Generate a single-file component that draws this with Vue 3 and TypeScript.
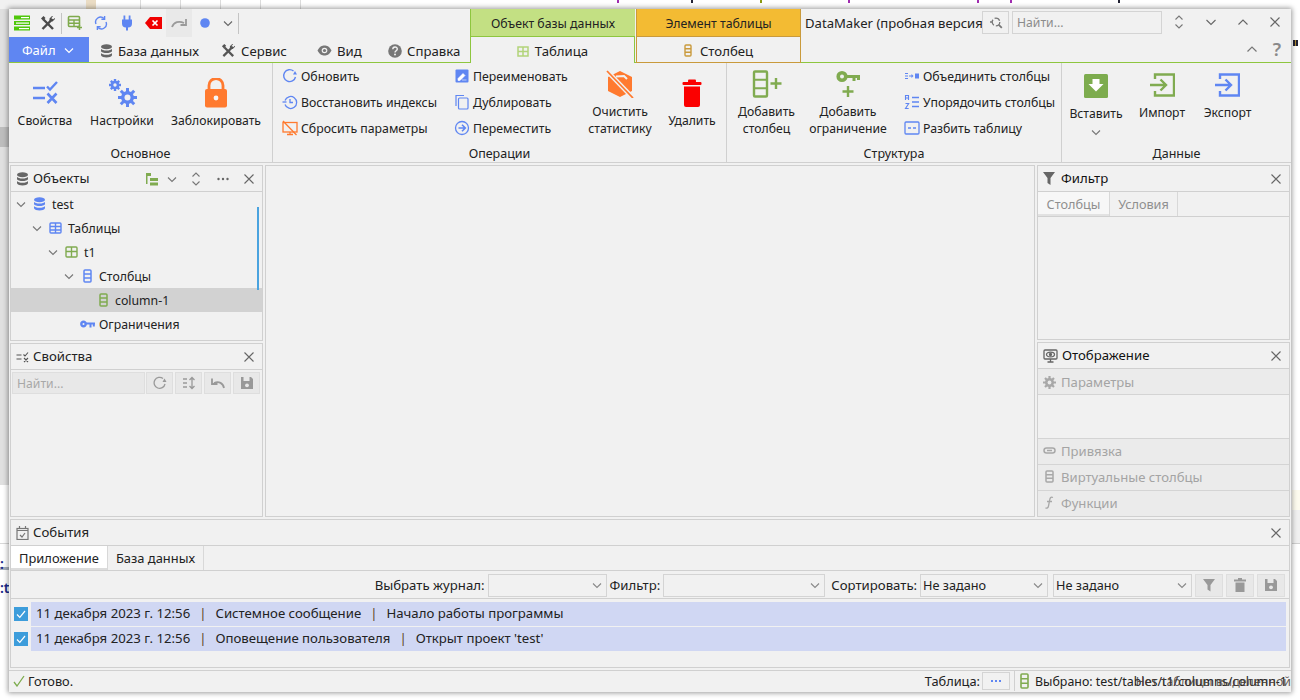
<script setup lang="ts">
type TreeRow = { label: string; level: number; kind: string; open: boolean; selected?: boolean }

const treeRows: TreeRow[] = [
  { label: 'test', level: 0, kind: 'db', open: true },
  { label: 'Таблицы', level: 1, kind: 'tables', open: true },
  { label: 't1', level: 2, kind: 'table', open: true },
  { label: 'Столбцы', level: 3, kind: 'columns', open: true },
  { label: 'column-1', level: 4, kind: 'column', open: false, selected: true },
  { label: 'Ограничения', level: 3, kind: 'key', open: false },
]

const logRows = [
  { date: '11 декабря 2023 г. 12:56', type: 'Системное сообщение', text: 'Начало работы программы' },
  { date: '11 декабря 2023 г. 12:56', type: 'Оповещение пользователя', text: "Открыт проект 'test'" },
]

const chevron = 'M3 5.5l4 4 4-4'
</script>

<template>
  <div class="desk">
    <!-- то, что видно за окном -->
    <div class="behind top-strip">
      <i class="tan"></i>
      <i v-for="x in [140, 180, 220, 260, 300]" :key="x" class="grid-line" :style="{ left: x + 'px' }"></i>
      <i
        v-for="m in [[617, '#a02cb0'], [691, '#223'], [760, '#8a9a10'], [848, '#a02cb0'], [977, '#a02cb0'], [1010, '#a02cb0'], [1118, '#223']]"
        :key="String(m[0])"
        class="mark"
        :style="{ left: m[0] + 'px', background: String(m[1]) }"
      ></i>
    </div>
    <div class="behind left-strip"><i class="patch"></i></div>
    <div class="behind left-line"></div>
    <div class="behind left-bar"></div>
    <div class="behind left-text">:<br />:t</div>
    <div class="behind right-yellow"></div>
    <div class="behind right-grey"></div>
    <div class="behind right-marks"></div>

    <div class="window">
      <!-- верхняя строка -->
      <header class="titlebar">
        <div class="quick">
          <button class="qbtn">
            <svg width="18" height="16" viewBox="0 0 18 16"><g fill="#4fc70a"><rect x="1" y="0.5" width="16" height="4" /><rect x="1" y="6" width="16" height="4" /><rect x="1" y="11.5" width="16" height="4" /></g><g fill="#fff"><rect x="8" y="2" width="8" height="1.2" /><rect x="3" y="7.5" width="13" height="1.2" /><rect x="6" y="13" width="10" height="1.2" /></g></svg>
          </button>
          <button class="qbtn">
            <svg width="16" height="16" viewBox="0 0 16 16" fill="none" stroke="#4a4a4a"><path d="M3.500 4.500l9.500 9.500" stroke-width="2.400" /><path d="M1 3.500L3.500 1l2 2-2.500 2.500z" fill="#4a4a4a" stroke="none" /><path d="M12.500 4L2.500 14" stroke-width="2.400" /><path d="M9.500 6V3.500L12 1l1 .3-1.800 2 1.500 1.500 2-1.800.3 1L12.500 6.500z" fill="#4a4a4a" stroke="none" /></svg>
          </button>
          <i class="qsep"></i>
          <button class="qbtn">
            <svg width="16" height="16" viewBox="0 0 16 16" fill="none"><rect x="1.500" y="1.500" width="11" height="10" rx="1" stroke="#7faa4c" stroke-width="1.600" /><path d="M1.500 5h11M7 5v6.500M2 8.300h10" stroke="#7faa4c" stroke-width="1.400" /><path d="M12.500 10v5M10 12.500h5" stroke="#7faa4c" stroke-width="1.500" /></svg>
          </button>
          <button class="qbtn">
            <svg width="14" height="16" viewBox="0 0 14 16" fill="none" stroke="#5f86f2" stroke-width="1.400"><path d="M2 9A5 5 0 0 1 10 3.400M12 7a5 5 0 0 1-8 5.600" /><path d="M10.600 1v3.200H7.400M3.400 15v-3.200h3.200" /></svg>
          </button>
          <button class="qbtn">
            <svg width="12" height="16" viewBox="0 0 12 16" fill="#5f86f2"><rect x="2.500" y="0.500" width="1.800" height="5" /><rect x="7.700" y="0.500" width="1.800" height="5" /><path d="M1 4.500h10v4a4 4 0 0 1-4 4V15.500H5v-3a4 4 0 0 1-4-4z" /></svg>
          </button>
          <button class="qbtn">
            <svg width="17" height="12" viewBox="0 0 17 12"><path d="M5 0h12v12H5L0 6z" fill="#f00000" /><path d="M7.500 3.500l5 5M12.500 3.500l-5 5" stroke="#fff" stroke-width="1.700" /></svg>
          </button>
          <button class="qbtn hovered">
            <svg width="16" height="10" viewBox="0 0 16 10" fill="none" stroke="#9a9a9a" stroke-width="1.800"><path d="M1 9c2-5 7-6.500 12-4" /><path d="M15 1v6H9.500" /></svg>
          </button>
          <button class="qbtn">
            <svg width="10" height="10" viewBox="0 0 10 10"><circle cx="5" cy="5" r="4.800" fill="#5f86f2" /></svg>
          </button>
          <button class="qbtn small">
            <svg width="14" height="14" viewBox="0 0 14 14" fill="none" stroke="#666" stroke-width="1.100"><path :d="chevron" /></svg>
          </button>
          <i class="qsep"></i>
        </div>
        <div class="ctx ctx-green">Объект базы данных</div>
        <div class="ctx ctx-orange">Элемент таблицы</div>
        <div class="app-title">DataMaker (пробная версия</div>
        <button class="search-btn">
          <svg width="14" height="14" viewBox="0 0 14 14" fill="none" stroke="#777" stroke-width="1.300"><circle cx="7" cy="6" r="3.800" stroke-dasharray="6 2" /><path d="M9.800 8.800l3 3" stroke-width="1.800" /><path d="M1 6h2" /></svg>
        </button>
        <div class="search-input">Найти...</div>
        <div class="win-btns">
          <svg width="14" height="16" viewBox="0 0 14 16" fill="none" stroke="#777" stroke-width="1.100"><path d="M3.500 5.500L7 2l3.500 3.500M3.500 10.500L7 14l3.500-3.500" /></svg>
          <svg width="14" height="14" viewBox="0 0 14 14" fill="none" stroke="#666" stroke-width="1.100"><path d="M2.500 5l4.500 4.500L11.500 5" /></svg>
          <svg width="14" height="14" viewBox="0 0 14 14" fill="none" stroke="#666" stroke-width="1.100"><path d="M2.500 9.500L7 5l4.500 4.500" /></svg>
          <svg width="14" height="14" viewBox="0 0 14 14" fill="none" stroke="#666" stroke-width="1.100"><path d="M2.500 2.500l9 9M11.500 2.500l-9 9" /></svg>
        </div>
      </header>

      <!-- вкладки ленты -->
      <nav class="tabbar">
        <div class="file-tab">
          Файл
          <svg width="14" height="14" viewBox="0 0 14 14" fill="none" stroke="#fff" stroke-width="1.200"><path :d="chevron" /></svg>
        </div>
        <div class="tab" style="width: 121px">
          <svg width="13" height="14" viewBox="0 0 13 14" fill="#666"><ellipse cx="6.500" cy="2.800" rx="5.500" ry="2.500" /><path d="M1 4.800c1 2.400 10 2.400 11 0v2.500c-1 2.400-10 2.400-11 0zM1 9c1 2.400 10 2.400 11 0v2.300c-1 2.900-10 2.900-11 0z" /></svg>
          База данных
        </div>
        <div class="tab" style="width: 96px">
          <svg width="15" height="15" viewBox="0 0 16 16" fill="none" stroke="#555"><path d="M3.500 4.500l9.500 9.500" stroke-width="2.400" /><path d="M1 3.500L3.500 1l2 2-2.500 2.500z" fill="#555" stroke="none" /><path d="M12.500 4L2.500 14" stroke-width="2.400" /><path d="M9.500 6V3.500L12 1l1 .3-1.800 2 1.500 1.500 2-1.800.3 1L12.500 6.500z" fill="#555" stroke="none" /></svg>
          Сервис
        </div>
        <div class="tab" style="width: 71px">
          <svg width="15" height="11" viewBox="0 0 15 11"><path d="M.5 5.500C3 1 5 .5 7.500.5s4.500.5 7 5c-2.500 4.500-4.500 5-7 5s-4.500-.5-7-5z" fill="#777" /><circle cx="7.500" cy="5.500" r="2.800" fill="#f1f1f1" /><circle cx="7.500" cy="5.500" r="1.600" fill="#777" /></svg>
          Вид
        </div>
        <div class="tab" style="width: 93px">
          <svg width="14" height="14" viewBox="0 0 14 14"><circle cx="7" cy="7" r="6.800" fill="#777" /><path d="M4.800 5.300c0-3 4.500-3 4.500-.2 0 1.800-2.300 1.600-2.300 3.500" fill="none" stroke="#f1f1f1" stroke-width="1.400" /><circle cx="7" cy="10.600" r="1" fill="#f1f1f1" /></svg>
          Справка
        </div>
        <div class="ctx-tab green-tab">
          <svg width="12" height="11" viewBox="0 0 12 11" fill="none" stroke="#b2d47a" stroke-width="1.500"><rect x="1" y="1" width="10" height="9" /><path d="M1 5.500h10M6 1v9" /></svg>
          Таблица
        </div>
        <div class="ctx-tab orange-tab">
          <svg width="8" height="13" viewBox="0 0 8 13" fill="none" stroke="#c99a3c" stroke-width="1.400"><rect x="1" y="1" width="6" height="11" rx="1" /><path d="M1 4.700h6M1 8.300h6" /></svg>
          Столбец
        </div>
        <div class="tabbar-right">
          <svg width="14" height="14" viewBox="0 0 14 14" fill="none" stroke="#777" stroke-width="1.200"><path d="M2.500 9.500L7 5l4.500 4.500" /></svg>
          <span class="help-mark">?</span>
        </div>
      </nav>

      <!-- лента -->
      <section class="ribbon">
        <div class="group" style="width: 264px">
          <div class="group-body">
            <button class="big" style="width: 72px">
              <svg width="28" height="28" viewBox="0 0 28 28" fill="none" stroke="#5f86f2"><path d="M2 9h12M2 19h12" stroke-width="2.600" /><path d="M16 7.500l3 3 7-7.500" stroke-width="2.400" /><path d="M16.500 14.500l9 9.500M25.500 14.500l-9 9.500" stroke-width="2.600" /></svg>
              <span>Свойства</span>
            </button>
            <button class="big" style="width: 82px">
              <svg width="30" height="30" class="tall" viewBox="0 0 30 30"><g fill="#5f86f2"><circle cx="8" cy="7" r="4.300" /><circle cx="20.500" cy="19.500" r="6.500" /></g><g stroke="#5f86f2" stroke-width="2.400"><path d="M8 1v12M2 7h12M3.800 2.800l8.400 8.400M12.200 2.800l-8.400 8.400" /><path d="M20.500 10v19M11 19.500h19M13.800 12.800l13.400 13.400M27.200 12.800L13.800 26.200" stroke-width="3" /></g><circle cx="8" cy="7" r="1.700" fill="#f1f1f1" /><circle cx="20.500" cy="19.500" r="3" fill="#f1f1f1" /></svg>
              <span>Настройки</span>
            </button>
            <button class="big" style="width: 106px">
              <svg width="24" height="30" class="tall" viewBox="0 0 24 30"><path d="M5 13V7.500a7 7 0 0 1 14 0V13" fill="none" stroke="#ff7a2f" stroke-width="2.800" /><rect x="1" y="11" width="22" height="18.500" rx="2" fill="#ff7a2f" /><circle cx="12" cy="20" r="2.400" fill="#f6f6f6" /></svg>
              <span>Заблокировать</span>
            </button>
          </div>
          <div class="group-label">Основное</div>
        </div>

        <div class="group" style="width: 454px">
          <div class="group-body ops">
            <div class="small-col" style="width: 172px">
              <div class="small-item">
                <svg width="16" height="16" viewBox="0 0 16 16" fill="none" stroke="#5f86f2" stroke-width="1.400"><path d="M13.500 9A6 6 0 1 1 11.500 3" /><path d="M15 6.500h-4l2-3.500z" fill="#5f86f2" stroke="none" /></svg>
                Обновить
              </div>
              <div class="small-item">
                <svg width="16" height="16" viewBox="0 0 16 16" fill="none" stroke="#5f86f2" stroke-width="1.300"><path d="M3 6.500A6 6 0 1 1 3 10.500" /><path d="M0.500 8h4" /><path d="M8 5v3.500H11" /></svg>
                Восстановить индексы
              </div>
              <div class="small-item">
                <svg width="16" height="16" viewBox="0 0 16 16" fill="none" stroke="#ff7a2f" stroke-width="1.300"><rect x="1" y="2.500" width="14" height="9.500" /><path d="M1 1l13.500 14M5 14.500h6M8 12v2.500" /></svg>
                Сбросить параметры
              </div>
            </div>
            <div class="small-col" style="width: 126px">
              <div class="small-item">
                <svg width="16" height="16" viewBox="0 0 16 16"><rect x="1.500" y="1.500" width="13" height="13" rx="1" fill="#5f86f2" /><path d="M4 10.500l5-5 2 2-5 5H4zM8 12h4.500" fill="#fff" stroke="#fff" stroke-width=".6" /></svg>
                Переименовать
              </div>
              <div class="small-item">
                <svg width="16" height="16" viewBox="0 0 16 16" fill="none" stroke="#5f86f2" stroke-width="1.200"><path d="M2 12V1.500h8" /><rect x="4.500" y="4" width="9.500" height="11" rx="1" /></svg>
                Дублировать
              </div>
              <div class="small-item">
                <svg width="16" height="16" viewBox="0 0 16 16" fill="none" stroke="#5f86f2" stroke-width="1.300"><circle cx="8" cy="8" r="6.500" /><path d="M4.500 8h6.500M8 4.800L11.300 8 8 11.200" stroke-width="1.600" /></svg>
                Переместить
              </div>
            </div>
            <button class="big" style="width: 80px">
              <svg width="28" height="28" viewBox="0 0 28 28"><path d="M14 1l12 6v14l-12 6-12-6V7z" fill="#ff7a2f" /><path d="M10 6.500l8-.5 3 3" fill="none" stroke="#f1f1f1" stroke-width="2" /><path d="M1 1l26 27" stroke="#f1f1f1" stroke-width="4.500" /><path d="M1 1l26 27" stroke="#ff7a2f" stroke-width="1.800" /></svg>
              <span>Очистить<br />статистику</span>
            </button>
            <button class="big" style="width: 64px">
              <svg width="20" height="28" viewBox="0 0 20 28"><g fill="#fb0000"><rect x="0.500" y="3" width="19" height="3" rx="1" /><rect x="6" y="0.500" width="8" height="3" rx="1" /><path d="M2 7.500h16V26a2 2 0 0 1-2 2H4a2 2 0 0 1-2-2z" /></g></svg>
              <span>Удалить</span>
            </button>
          </div>
          <div class="group-label">Операции</div>
        </div>

        <div class="group" style="width: 335px">
          <div class="group-body">
            <button class="big" style="width: 79px">
              <svg width="30" height="28" viewBox="0 0 30 28" fill="none" stroke="#80ab50"><rect x="2" y="1.500" width="13" height="25" rx="1" stroke-width="2.400" /><path d="M2 9.800h13M2 18.200h13" stroke-width="2" /><path d="M24 8v11M18.500 13.500h11" stroke-width="2.400" /></svg>
              <span>Добавить<br />столбец</span>
            </button>
            <button class="big" style="width: 84px">
              <svg width="24" height="28" viewBox="0 0 24 28" fill="none" stroke="#80ab50"><circle cx="6" cy="6.500" r="3.800" stroke-width="3.600" /><path d="M9 6.500h15M18 6.500v4.500M22.500 6.500v3.500" stroke-width="3" /><path d="M12 16v11M6.500 21.500h11" stroke-width="2.400" /></svg>
              <span>Добавить<br />ограничение</span>
            </button>
            <div class="small-col" style="width: 160px; margin-left: 14px">
              <div class="small-item">
                <svg width="16" height="16" viewBox="0 0 16 16" fill="#5f86f2"><path d="M1 5h3v1H1zM1 7.500h3v1H1zM1 10h3v1H1zM5 7.500h3v1H5z" /><path d="M7.500 6l2 2-2 2z" /><rect x="11" y="5.500" width="4" height="5" /></svg>
                Объединить столбцы
              </div>
              <div class="small-item">
                <svg width="16" height="16" viewBox="0 0 16 16" fill="none" stroke="#5f86f2" stroke-width="1.300"><path d="M8 3.500h7M8 8h7M8 12.500h7" /><path d="M1.500 6V1.500h3V6M1.500 4h3M1.500 9.500h3.200L1.500 14.500h3.200" stroke-width="1.100" /></svg>
                Упорядочить столбцы
              </div>
              <div class="small-item">
                <svg width="16" height="16" viewBox="0 0 16 16" fill="none" stroke="#5f86f2" stroke-width="1.300"><rect x="1" y="2" width="14" height="12" rx="1" /><path d="M4 8h3M9 8h3" stroke-width="1.600" /></svg>
                Разбить таблицу
              </div>
            </div>
          </div>
          <div class="group-label">Структура</div>
        </div>

        <div class="group last" style="flex: 1">
          <div class="group-body">
            <button class="big insert" style="width: 68px">
              <svg width="24" height="28" viewBox="0 0 24 28"><rect y="2" width="24" height="24" rx="1.500" fill="#7dac4e" /><path d="M8.500 7h7v5h4L12 19.500 4.500 12h4z" fill="#fff" /></svg>
              <span>Вставить</span>
              <svg class="more" width="14" height="14" viewBox="0 0 14 14" fill="none" stroke="#777" stroke-width="1.100"><path :d="chevron" /></svg>
            </button>
            <button class="big drop" style="width: 64px">
              <svg width="25" height="28" viewBox="0 0 25 28" fill="none" stroke="#80ab50" stroke-width="2.400"><path d="M5 8V3.500h19v21H5V20" /><path d="M0 14h15M10.500 8.500l5.500 5.500-5.500 5.500" /></svg>
              <span>Импорт</span>
            </button>
            <button class="big drop" style="width: 67px">
              <svg width="25" height="28" viewBox="0 0 25 28" fill="none" stroke="#5f86f2" stroke-width="2.400"><path d="M5 8V3.500h19v21H5V20" /><path d="M0 14h15M10.500 8.500l5.500 5.500-5.500 5.500" /></svg>
              <span>Экспорт</span>
            </button>
          </div>
          <div class="group-label">Данные</div>
        </div>
      </section>

      <!-- рабочая область -->
      <main class="work">
        <div class="side left">
          <section class="panel objects">
            <div class="panel-head">
              <svg width="13" height="14" viewBox="0 0 13 14" fill="#666"><ellipse cx="6.500" cy="2.800" rx="5.500" ry="2.500" /><path d="M1 4.800c1 2.400 10 2.400 11 0v2.500c-1 2.400-10 2.400-11 0zM1 9c1 2.400 10 2.400 11 0v2.300c-1 2.900-10 2.900-11 0z" /></svg>
              <span class="panel-title">Объекты</span>
              <div class="head-tools">
                <svg width="14" height="14" viewBox="0 0 14 14" fill="#80ab50"><rect x="1" y="1" width="5" height="3" /><rect x="1" y="4" width="1.500" height="8" /><rect x="5" y="6" width="8" height="3" /><rect x="5" y="10.500" width="8" height="3" /></svg>
                <svg width="14" height="14" viewBox="0 0 14 14" fill="none" stroke="#777" stroke-width="1.100"><path :d="chevron" /></svg>
                <svg width="14" height="16" viewBox="0 0 14 16" fill="none" stroke="#777" stroke-width="1.100"><path d="M3.500 5.500L7 2l3.500 3.500M3.500 10.500L7 14l3.500-3.500" /></svg>
                <svg width="14" height="14" viewBox="0 0 14 14" fill="#666"><circle cx="2.500" cy="7" r="1.200" /><circle cx="7" cy="7" r="1.200" /><circle cx="11.500" cy="7" r="1.200" /></svg>
              </div>
              <svg class="close" width="12" height="12" viewBox="0 0 12 12" fill="none" stroke="#666" stroke-width="1.100"><path d="M1.500 1.500l9 9M10.500 1.500l-9 9" /></svg>
            </div>
            <div class="tree">
              <i class="tree-scroll"></i>
              <div
                v-for="row in treeRows"
                :key="row.label"
                class="tree-row"
                :class="{ selected: row.selected }"
                :style="{ paddingLeft: 3 + row.level * 16 + 'px' }"
              >
                <svg v-if="row.open" class="arrow" width="14" height="14" viewBox="0 0 14 14" fill="none" stroke="#777" stroke-width="1.100"><path :d="chevron" /></svg>
                <i v-else class="arrow"></i>
                <svg v-if="row.kind === 'db'" width="13" height="14" viewBox="0 0 13 14" fill="#5f86f2"><ellipse cx="6.500" cy="2.800" rx="5.500" ry="2.500" /><path d="M1 4.800c1 2.400 10 2.400 11 0v2.500c-1 2.400-10 2.400-11 0zM1 9c1 2.400 10 2.400 11 0v2.300c-1 2.900-10 2.900-11 0z" /></svg>
                <svg v-else-if="row.kind === 'tables'" width="13" height="12" viewBox="0 0 13 12" fill="none" stroke="#5f86f2" stroke-width="1.400"><rect x="1" y="1" width="11" height="10" rx="1" /><path d="M1 4.500h11M1 8h11M6.500 1v10" /></svg>
                <svg v-else-if="row.kind === 'table'" width="13" height="12" viewBox="0 0 13 12" fill="none" stroke="#80ab50" stroke-width="1.400"><rect x="1" y="1" width="11" height="10" rx="1" /><path d="M1 5.500h11M6.500 1v10" /></svg>
                <svg v-else-if="row.kind === 'columns'" class="col-icon" width="13" height="14" viewBox="0 0 13 14" fill="none" stroke="#5f86f2" stroke-width="1.500"><rect x="3" y="1" width="7" height="12" rx="1" /><path d="M3 5h7M3 9h7" /></svg>
                <svg v-else-if="row.kind === 'column'" class="col-icon" width="13" height="14" viewBox="0 0 13 14" fill="none" stroke="#80ab50" stroke-width="1.500"><rect x="3" y="1" width="7" height="12" rx="1" /><path d="M3 5h7M3 9h7" /></svg>
                <svg v-else class="key-icon" width="15" height="9" viewBox="0 0 15 9" fill="none" stroke="#5f86f2"><circle cx="3.500" cy="4" r="2.200" stroke-width="2.400" /><path d="M5.500 3.500H15M10.500 3.500V7.500M13.800 3.500V6.500" stroke-width="2" /></svg>
                <span class="tree-label">{{ row.label }}</span>
              </div>
            </div>
          </section>

          <section class="panel props">
            <div class="panel-head">
              <svg width="13" height="12" viewBox="0 0 13 12" fill="none" stroke="#555" stroke-width="1.100"><path d="M.5 4h5M.5 8h5M7.500 3.500l1.500 1.500 3-3.500M8 7l4 4M12 7l-4 4" /></svg>
              <span class="panel-title">Свойства</span>
              <svg class="close" width="12" height="12" viewBox="0 0 12 12" fill="none" stroke="#666" stroke-width="1.100"><path d="M1.500 1.500l9 9M10.500 1.500l-9 9" /></svg>
            </div>
            <div class="props-tools">
              <div class="dim-input">Найти...</div>
              <button class="dim-btn">
                <svg width="14" height="14" viewBox="0 0 14 14" fill="none" stroke="#999" stroke-width="1.300"><path d="M12 8A5.500 5.500 0 1 1 10 2.500" /><path d="M13.500 6H9.500l2-3.500z" fill="#999" stroke="none" /></svg>
              </button>
              <button class="dim-btn">
                <svg width="14" height="14" viewBox="0 0 14 14" fill="none" stroke="#999" stroke-width="1.300"><path d="M1 3h4M1 7h4M1 11h4M10 1.500v11M7.500 4L10 1.500 12.500 4M7.500 10l2.500 2.500 2.500-2.500" /></svg>
              </button>
              <button class="dim-btn">
                <svg width="14" height="12" viewBox="0 0 14 12" fill="none" stroke="#999" stroke-width="1.800"><path d="M13 11c-1-5-5-7-10-5" /><path d="M1 1.500V7h5.500" /></svg>
              </button>
              <button class="dim-btn">
                <svg width="14" height="14" viewBox="0 0 14 14"><path d="M1 1h10l2 2v10H1z" fill="#999" /><rect x="3.500" y="1" width="6" height="4" fill="#e8e8e8" /><circle cx="7" cy="9.300" r="1.900" fill="#e8e8e8" /></svg>
              </button>
            </div>
          </section>
        </div>

        <div class="center"></div>

        <div class="side right">
          <section class="panel filter">
            <div class="panel-head">
              <svg width="12" height="13" viewBox="0 0 12 13" fill="#666"><path d="M0 0h12L7.500 6v7l-3-2V6z" /></svg>
              <span class="panel-title dark nudge">Фильтр</span>
              <svg class="close" width="12" height="12" viewBox="0 0 12 12" fill="none" stroke="#666" stroke-width="1.100"><path d="M1.500 1.500l9 9M10.500 1.500l-9 9" /></svg>
            </div>
            <div class="mini-tabs">
              <div class="mini-tab on dim" style="width: 72px">Столбцы</div>
              <div class="mini-tab dim" style="width: 68px">Условия</div>
            </div>
          </section>

          <section class="panel display">
            <div class="panel-head">
              <svg width="15" height="14" viewBox="0 0 15 14" fill="none" stroke="#666" stroke-width="1.300"><rect x="1" y="1" width="13" height="9" rx="1" /><ellipse cx="7.500" cy="5.500" rx="4" ry="2.400" /><circle cx="7.500" cy="5.500" r="1" fill="#666" /><path d="M7.500 10v3M4.500 13h6" /></svg>
              <span class="panel-title dark">Отображение</span>
              <svg class="close" width="12" height="12" viewBox="0 0 12 12" fill="none" stroke="#666" stroke-width="1.100"><path d="M1.500 1.500l9 9M10.500 1.500l-9 9" /></svg>
            </div>
            <div class="acc first">
              <svg width="13" height="13" viewBox="0 0 13 13"><circle cx="6.500" cy="6.500" r="4.500" fill="#a8a8a8" /><path d="M6.500 0v13M0 6.500h13M2 2l9 9M11 2l-9 9" stroke="#a8a8a8" stroke-width="2.200" /><circle cx="6.500" cy="6.500" r="1.900" fill="#e9e9e9" /></svg>
              Параметры
            </div>
            <div class="acc-body"></div>
            <div class="acc">
              <svg width="13" height="13" viewBox="0 0 13 13" fill="none" stroke="#a8a8a8" stroke-width="1.500"><rect x="1" y="4" width="11" height="5" rx="2.500" /><path d="M4 6.500h5" /></svg>
              Привязка
            </div>
            <div class="acc">
              <svg width="13" height="13" viewBox="0 0 13 13" fill="none" stroke="#a8a8a8" stroke-width="1.500"><rect x="3" y="1" width="7" height="11" rx="1" /><path d="M3 4.700h7M3 8.300h7" /></svg>
              Виртуальные столбцы
            </div>
            <div class="acc grow">
              <svg width="13" height="13" viewBox="0 0 13 13" fill="none" stroke="#a8a8a8" stroke-width="1.300"><path d="M10 1.500C7.500.5 7 2 6.500 5L5.500 10c-.4 2-1.500 2.500-3 1.800M4 5.500h5" /></svg>
              Функции
            </div>
          </section>
        </div>
      </main>

      <!-- события -->
      <section class="panel events">
        <div class="panel-head">
          <svg width="13" height="14" viewBox="0 0 13 14" fill="none" stroke="#777" stroke-width="1.200"><rect x="1" y="2.500" width="11" height="11" /><path d="M3.500 0v3M9.500 0v3M1 4.500h11" /><path d="M4 9l2 2 3-4" /></svg>
          <span class="panel-title">События</span>
          <svg class="close" width="12" height="12" viewBox="0 0 12 12" fill="none" stroke="#666" stroke-width="1.100"><path d="M1.500 1.500l9 9M10.500 1.500l-9 9" /></svg>
        </div>
        <div class="mini-tabs ev-tabs">
          <div class="mini-tab on white" style="width: 97px">Приложение</div>
          <div class="mini-tab" style="width: 96px">База данных</div>
        </div>
        <div class="ev-tools">
          <span class="ev-label">Выбрать журнал:</span>
          <div class="select" style="width: 119px"><svg width="14" height="14" viewBox="0 0 14 14" fill="none" stroke="#888" stroke-width="1.100"><path :d="chevron" /></svg></div>
          <span class="ev-label">Фильтр:</span>
          <div class="select" style="width: 162px"><svg width="14" height="14" viewBox="0 0 14 14" fill="none" stroke="#888" stroke-width="1.100"><path :d="chevron" /></svg></div>
          <span class="ev-label sort">Сортировать:</span>
          <div class="select" style="width: 128px">Не задано<svg width="14" height="14" viewBox="0 0 14 14" fill="none" stroke="#888" stroke-width="1.100"><path :d="chevron" /></svg></div>
          <div class="select" style="width: 139px; margin-left: 2px">Не задано<svg width="14" height="14" viewBox="0 0 14 14" fill="none" stroke="#888" stroke-width="1.100"><path :d="chevron" /></svg></div>
          <button class="dim-btn ev-btn">
            <svg width="14" height="14" viewBox="0 0 14 14" fill="#999"><path d="M1 1h12L8.500 7v6.500l-3-2V7z" /></svg>
          </button>
          <button class="dim-btn ev-btn">
            <svg width="12" height="14" viewBox="0 0 12 14" fill="#999"><rect x="0" y="1.500" width="12" height="2" /><rect x="4" y="0" width="4" height="2" /><path d="M1.500 4.500h9V14h-9z" /></svg>
          </button>
          <button class="dim-btn ev-btn">
            <svg width="14" height="14" viewBox="0 0 14 14"><path d="M1 1h10l2 2v10H1z" fill="#999" /><rect x="3.500" y="1" width="6" height="4" fill="#e8e8e8" /><circle cx="7" cy="9.300" r="1.900" fill="#e8e8e8" /></svg>
          </button>
        </div>
        <div class="log">
          <div v-for="(row, i) in logRows" :key="i" class="log-row">
            <span class="check">
              <svg width="14" height="14" viewBox="0 0 14 14" fill="none" stroke="#fff" stroke-width="1.200"><path d="M3 7.500l2.800 2.800L11 4" /></svg>
            </span>
            <div class="log-text">
              <span>{{ row.date }}</span><b>|</b><span>{{ row.type }}</span><b>|</b><span>{{ row.text }}</span>
            </div>
          </div>
        </div>
      </section>

      <!-- строка состояния -->
      <footer class="status">
        <svg width="12" height="12" viewBox="0 0 12 12" fill="none" stroke="#7dac4e" stroke-width="1.300"><path d="M1 7l3 4 7-10" /></svg>
        <span class="ready">Готово.</span>
        <span class="st-label">Таблица:</span>
        <button class="st-btn">
          <svg width="12" height="4" viewBox="0 0 12 4" fill="#5f86f2"><rect x="1" y="1" width="2" height="2" /><rect x="5" y="1" width="2" height="2" /><rect x="9" y="1" width="2" height="2" /></svg>
        </button>
        <i class="st-sep"></i>
        <svg class="st-icon" width="9" height="16" viewBox="0 0 9 16" fill="none" stroke="#80ab50" stroke-width="1.600"><rect x="1" y="1" width="7" height="14" rx="1" /><path d="M1 5.700h7M1 10.300h7" /></svg>
        <span class="st-path">Выбрано: test/tables/t1/columns/column-1<span class="ghost">Нет таблицы выделенной</span></span>
      </footer>
    </div>
  </div>
</template>

<style>
html,
body {
  margin: 0;
  background: #fff;
}
</style>

<style scoped>
.desk {
  position: relative;
  width: 1300px;
  height: 700px;
  overflow: hidden;
  padding: 9px 9px 0;
  box-sizing: border-box;
  font-family: "Noto Sans", "Open Sans", sans-serif;
  font-size: 12.2px;
  color: #222;
}

.behind {
  position: absolute;
}

.top-strip {
  left: 0;
  top: 0;
  width: 1300px;
  height: 9px;
  background: linear-gradient(90deg, #f1f1f1 86px, #fff 86px);
}

.tan {
  position: absolute;
  left: 86px;
  top: 0;
  width: 10px;
  height: 9px;
  background: #eadcc4;
}

.grid-line {
  position: absolute;
  top: 0;
  width: 1px;
  height: 9px;
  background: #dcdcdc;
}

.mark {
  position: absolute;
  top: 0;
  width: 2px;
  height: 3px;
}

.left-strip {
  left: 0;
  top: 9px;
  width: 9px;
  height: 476px;
  background: #e0e0e0;
}

.patch {
  position: absolute;
  left: 0;
  top: 118px;
  width: 9px;
  height: 20px;
  background: #bdbdbd;
}

.left-line {
  left: 0;
  top: 543px;
  width: 9px;
  height: 1px;
  background: #d8d8d8;
}

.left-bar {
  left: 0;
  top: 567px;
  width: 9px;
  height: 3px;
  background: #a8b0bc;
}

.left-text {
  left: 0;
  top: 552px;
  width: 9px;
  overflow: hidden;
  color: #1a2a8a;
  font-size: 14px;
  line-height: 24px;
  font-weight: 600;
}

.right-yellow {
  left: 1292px;
  top: 490px;
  width: 8px;
  height: 20px;
  background: #fdfbee;
}

.right-grey {
  left: 1292px;
  top: 510px;
  width: 8px;
  height: 33px;
  background: #f0f0f0;
  border-bottom: 1px solid #d0d0d0;
}

.right-marks {
  left: 1293px;
  top: 40px;
  width: 5px;
  height: 6px;
  background: linear-gradient(90deg, #223 40%, #b08a30 40%, #b08a30 60%, #223 60%);
}

.window {
  position: relative;
  width: 1282px;
  height: 683px;
  background: #f1f1f1;
  box-shadow: 0 0 5px 1px rgba(0, 0, 0, 0.4);
  display: flex;
  flex-direction: column;
}

button {
  font: inherit;
  color: inherit;
  background: none;
  border: 0;
  padding: 0;
}

/* верхняя строка */
.titlebar {
  display: flex;
  height: 28px;
  flex: none;
}

.quick {
  display: flex;
  align-items: stretch;
  width: 461px;
  flex: none;
}

.qbtn {
  width: 26px;
  display: flex;
  align-items: center;
  justify-content: center;
}

.qbtn.small {
  width: 20px;
}

.qbtn.hovered {
  background: #e9e9e9;
}

.qsep {
  width: 1px;
  background: #c4c4c4;
  margin: 4px 0 3px;
}

.ctx {
  height: 28px;
  line-height: 29px;
  text-align: center;
  box-sizing: border-box;
  flex: none;
  font-size: 12.3px;
}

.ctx-green {
  width: 165px;
  background: #c3e083;
  border-left: 1px solid #8ec63f;
  border-bottom: 1px solid #8ec63f;
}

.ctx-orange {
  width: 165px;
  margin-left: 1px;
  background: #f3bb33;
  border-bottom: 1px solid #c99a3c;
  border-left: 1px solid #c99a3c;
  border-right: 1px solid #c99a3c;
}

.app-title {
  width: 177px;
  margin-left: 4px;
  line-height: 29px;
  white-space: nowrap;
  overflow: hidden;
  flex: none;
  font-size: 13.1px;
}

.search-btn {
  width: 27px;
  height: 23px;
  margin-top: 2px;
  border: 1px solid #d4d4d4;
  box-sizing: border-box;
  display: flex;
  align-items: center;
  justify-content: center;
  flex: none;
}

.search-input {
  width: 150px;
  height: 23px;
  margin: 2px 0 0 3px;
  border: 1px solid #d4d4d4;
  box-sizing: border-box;
  padding-left: 4px;
  line-height: 21px;
  color: #8c8c8c;
  flex: none;
}

.win-btns {
  display: flex;
  align-items: center;
  gap: 18px;
  margin-left: 10px;
  padding-bottom: 3px;
}

/* вкладки */
.tabbar {
  display: flex;
  height: 26px;
  flex: none;
  border-bottom: 1px solid #8ec63f;
  box-sizing: border-box;
}

.file-tab {
  width: 80px;
  background: #5f86f2;
  color: #fff;
  display: flex;
  align-items: center;
  gap: 6px;
  flex: none;
  padding-left: 13px;
  box-sizing: border-box;
  font-size: 13px;
}

.tab {
  display: flex;
  align-items: center;
  gap: 5px;
  padding: 2px 0 0 11px;
  box-sizing: border-box;
  flex: none;
  font-size: 13.2px;
}

.ctx-tab {
  height: 26px;
  padding-top: 2px;
  display: flex;
  align-items: center;
  justify-content: center;
  gap: 6px;
  box-sizing: border-box;
  flex: none;
  background: #f1f1f1;
  font-size: 13.2px;
}

.green-tab {
  width: 165px;
  border-left: 1px solid #8ec63f;
  border-right: 1px solid #8ec63f;
}

.orange-tab {
  width: 165px;
  margin-left: 1px;
  gap: 8px;
  border-left: 1px solid #c99a3c;
  border-right: 1px solid #c99a3c;
  border-bottom: 1px solid #c99a3c;
}

.tabbar-right {
  margin-left: auto;
  display: flex;
  align-items: center;
  gap: 14px;
  padding-right: 10px;
  padding-bottom: 1px;
}

.help-mark {
  font-size: 18px;
  font-weight: 600;
  color: #8a8a8a;
  line-height: 1;
}

/* лента */
.ribbon {
  display: flex;
  height: 99px;
  flex: none;
  border-bottom: 1px solid #d0d0d0;
  box-sizing: content-box;
}

.group {
  display: flex;
  flex-direction: column;
  box-sizing: border-box;
  border-right: 1px solid #d0d0d0;
  flex: none;
}

.group.last {
  border-right: 0;
  flex: 1;
}

.group-body {
  height: 81px;
  display: flex;
  flex: none;
}

.group-body.ops {
  padding-left: 9px;
}

.group-label {
  height: 18px;
  line-height: 19px;
  text-align: center;
  font-size: 12.5px;
}

.small-col {
  flex: none;
}

.small-item {
  height: 26px;
  display: flex;
  align-items: center;
  gap: 3px;
  white-space: nowrap;
  font-size: 12.3px;
}

.big {
  display: flex;
  flex-direction: column;
  align-items: center;
  justify-content: center;
  gap: 5px;
  flex: none;
  line-height: 17px;
  white-space: nowrap;
  text-align: center;
}

.big span {
  display: block;
}

.big .tall {
  margin: -1px 0;
}

.big.insert {
  padding-top: 3px;
  box-sizing: border-box;
}

.big .more {
  margin-top: -2px;
}

.big.drop {
  padding-bottom: 15px;
  box-sizing: border-box;
}

/* рабочая область */
.work {
  display: flex;
  height: 352px;
  flex: none;
  margin: 2px 1px 0;
  gap: 2px;
}

.side {
  width: 253px;
  flex: none;
  display: flex;
  flex-direction: column;
  gap: 2px;
}

.center {
  flex: 1;
  border: 1px solid #d0d0d0;
}

.panel {
  border: 1px solid #d0d0d0;
  box-sizing: border-box;
  display: flex;
  flex-direction: column;
}

.objects {
  height: 176px;
  flex: none;
}

.props {
  flex: 1;
}

.filter {
  height: 175px;
  flex: none;
}

.display {
  flex: 1;
}

.panel-head {
  height: 26px;
  flex: none;
  display: flex;
  align-items: center;
  padding: 0 7px 0 5px;
  border-bottom: 1px solid #d0d0d0;
  gap: 4px;
  box-sizing: border-box;
}

.panel-title {
  font-size: 13.2px;
  margin-bottom: 2px;
}

.panel-title.dark {
  color: #111;
}

.panel-title.nudge {
  margin-left: 2px;
}

.head-tools {
  margin-left: auto;
  display: flex;
  align-items: center;
  gap: 10px;
  margin-right: 9px;
}

.head-tools svg:nth-child(1) {
  margin-right: -4px;
}

.head-tools svg:nth-child(3) {
  margin-right: 3px;
}

.close {
  margin-left: auto;
}

.head-tools + .close {
  margin-left: 0;
}

.tree {
  position: relative;
  flex: 1;
}

.tree-scroll {
  position: absolute;
  left: 246px;
  top: 15px;
  width: 2px;
  height: 83px;
  background: #4aa3df;
}

.tree-row {
  height: 24px;
  display: flex;
  align-items: center;
  gap: 5px;
  box-sizing: border-box;
}

.tree-row.selected {
  background: #d2d2d2;
}

.tree-label {
  margin-left: 1px;
  font-size: 12.3px;
}

.arrow {
  width: 14px;
  height: 14px;
  flex: none;
}

.col-icon {
  margin-right: -1px;
}

.key-icon {
  margin-left: -1px;
  margin-right: -2px;
}

.props-tools {
  display: flex;
  gap: 2px;
  padding: 2px 1px;
  height: 26px;
  box-sizing: border-box;
}

.dim-input {
  width: 133px;
  margin-right: -1px;
  background: #e8e8e8;
  border: 1px solid #dedede;
  box-sizing: border-box;
  padding-left: 4px;
  line-height: 21px;
  color: #a8a8a8;
}

.dim-btn {
  width: 27px;
  background: #e8e8e8;
  border: 1px solid #dedede;
  box-sizing: border-box;
  display: flex;
  align-items: center;
  justify-content: center;
  flex: none;
}

.mini-tabs {
  display: flex;
  height: 25px;
  flex: none;
  border-bottom: 1px solid #d0d0d0;
  box-sizing: border-box;
  font-size: 12.7px;
}

.mini-tab {
  text-align: center;
  line-height: 25px;
  border-right: 1px solid #d8d8d8;
  box-sizing: border-box;
  flex: none;
}

.mini-tab.dim {
  color: #8f8f8f;
}

.mini-tab.on {
  box-shadow: inset 0 -2px 0 #e2e2e2;
  background: #f7f7f7;
}

.mini-tab.white {
  background: #fff;
  box-shadow: inset 0 -2px 0 #dcdcdc;
}

.acc {
  height: 26px;
  flex: none;
  display: flex;
  align-items: center;
  gap: 5px;
  padding: 0 0 2px 5px;
  background: #ebebeb;
  border-bottom: 1px solid #d4d4d4;
  box-sizing: border-box;
  color: #a4a4a4;
  font-size: 13.1px;
}

.acc.first {
  padding: 1px 0 0 5px;
}

.acc.grow {
  flex: 1;
  border-bottom: 0;
}

.acc-body {
  height: 44px;
  flex: none;
  border-bottom: 1px solid #d4d4d4;
  box-sizing: border-box;
}

/* события */
.events {
  height: 149px;
  margin: 2px 1px 0;
  flex: none;
}

.ev-tabs {
  height: 25px;
  font-size: 12.9px;
}

.ev-tools {
  height: 28px;
  flex: none;
  display: flex;
  align-items: center;
  justify-content: flex-end;
  padding: 1px 4px 0 0;
  gap: 3px;
  border-bottom: 1px solid #d0d0d0;
  box-sizing: border-box;
  font-size: 13.2px;
}

.ev-label.sort {
  margin-left: 3px;
}

.select {
  height: 23px;
  flex: none;
  border: 1px solid #d4d4d4;
  box-sizing: border-box;
  display: flex;
  align-items: center;
  justify-content: space-between;
  padding: 0 2px 0 2px;
  color: #222;
  font-size: 12.7px;
}

.select svg {
  margin-left: auto;
}

.ev-btn {
  height: 23px;
  width: 28px;
}

.log {
  padding-top: 3px;
  padding-right: 3px;
  display: flex;
  flex-direction: column;
  gap: 1px;
}

.log-row {
  height: 24px;
  display: flex;
  align-items: center;
}

.check {
  width: 14px;
  height: 14px;
  margin: 0 3px;
  background: #3d9ddb;
  flex: none;
  display: block;
}

.check svg {
  display: block;
}

.log-text {
  flex: 1;
  height: 24px;
  line-height: 22px;
  background: #d0d7f3;
  padding-left: 5px;
  white-space: nowrap;
  font-size: 13.2px;
}

.log-text b {
  font-weight: 400;
  margin: 0 9px;
  color: #5a4020;
}

/* строка состояния */
.status {
  margin-top: 2px;
  border-top: 1px solid #d0d0d0;
  flex: 1;
  display: flex;
  align-items: center;
  padding: 0 0 2px 4px;
  box-sizing: border-box;
  font-size: 12.4px;
}

.ready {
  margin: 0 0 1px 3px;
  font-size: 12.8px;
}

.st-label {
  margin-left: auto;
  font-size: 12.8px;
}

.st-btn {
  width: 28px;
  height: 18px;
  margin-left: 2px;
  border: 1px solid #d4d4d4;
  box-sizing: border-box;
  display: flex;
  align-items: center;
  justify-content: center;
}

.st-sep {
  width: 1px;
  height: 20px;
  background: #d0d0d0;
  margin-left: 4px;
}

.st-icon {
  margin-left: 5px;
}

.st-path {
  position: relative;
  margin-left: 6px;
  width: 256px;
  white-space: nowrap;
  overflow: visible;
}

.ghost {
  position: absolute;
  right: 0;
  top: 0;
  color: rgba(70, 60, 55, 0.85);
}
</style>
